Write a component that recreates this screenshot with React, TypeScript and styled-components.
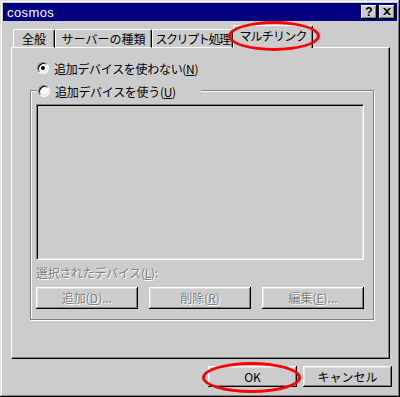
import styled, { createGlobalStyle } from "styled-components";

const FACE = "#cccccc";

const GlobalStyle = createGlobalStyle`
    html, body {
        margin: 0;
        padding: 0;
        background: ${FACE};
    }
    * {
        box-sizing: border-box;
    }
`;

interface TabProps {
    w: number;
    active?: boolean;
    squeeze?: number;
}

interface DisabledProps {
    disabled?: boolean;
}

interface BtnProps {
    w: number;
    h: number;
}

interface RingProps {
    x: number;
    y: number;
    w: number;
    h: number;
}

const Window = styled.div`
    position: relative;
    width: 400px;
    height: 397px;
    padding: 3px;
    background: ${FACE};
    box-shadow: inset -1px -1px #000, inset 1px 1px #e0e0e0, inset -2px -2px #808080, inset 2px 2px #fff;
    font-family: "Noto Sans CJK JP", "Liberation Sans", sans-serif;
    font-size: 12px;
    color: #000;
`;

const TitleBar = styled.div`
    height: 18px;
    background: #000080;
    color: #fff;
    display: flex;
    align-items: center;
    justify-content: space-between;
    padding: 0 2px 0 4px;
`;

const Title = styled.span`
    font-family: "Liberation Sans", sans-serif;
    font-size: 13px;
    letter-spacing: 0.4px;
`;

const CaptionButtons = styled.div`
    display: flex;
    gap: 2px;
`;

const CaptionButton = styled.div`
    width: 16px;
    height: 14px;
    background: ${FACE};
    box-shadow: inset -1px -1px #000, inset 1px 1px #fff, inset -2px -2px #808080;
    display: flex;
    align-items: center;
    justify-content: center;
    color: #000;
    font-family: "Liberation Sans", sans-serif;
    font-weight: 700;
    font-size: 12px;
    line-height: 1;
    padding-bottom: 1px;
`;

const Body = styled.div`
    padding: 0 7px 0 8px;
`;

const TabRow = styled.div`
    display: flex;
    align-items: flex-end;
    height: 22px;
    margin-top: 5px;
    padding-left: 2px;
    position: relative;
    z-index: 1;
    margin-bottom: -1px;
`;

const Tab = styled.div<TabProps>`
    width: ${p => p.w}px;
    height: ${p => (p.active ? 23 : 19)}px;
    background: ${FACE};
    border-top: 1px solid #fff;
    border-left: 1px solid #fff;
    border-right: 1px solid #000;
    border-bottom: ${p => (p.active ? "none" : "1px solid #fff")};
    border-radius: 2px 2px 0 0;
    box-shadow: inset -1px 0 #808080;
    display: flex;
    align-items: center;
    justify-content: center;
    padding-bottom: ${p => (p.active ? 3 : 1)}px;
    letter-spacing: ${p => p.squeeze ?? 0}px;
    white-space: nowrap;
    overflow: hidden;
`;

const Panel = styled.div`
    width: 379px;
    height: 312px;
    border-top: 1px solid #fff;
    border-left: 1px solid #fff;
    border-right: 1px solid #000;
    border-bottom: 1px solid #000;
    box-shadow: inset -1px -1px #808080;
    padding: 13px 0 0 18px;
`;

const RadioRow = styled.label`
    display: flex;
    align-items: center;
    gap: 5px;
    height: 14px;
    margin-left: 7px;
    white-space: nowrap;
    letter-spacing: -0.3px;
`;

const Radio = styled.span<{ checked?: boolean }>`
    position: relative;
    width: 12px;
    height: 12px;
    border-radius: 50%;
    background: #fff;
    border: 1px solid;
    border-color: #808080 #fff #fff #808080;
    box-shadow: inset 1px 1px #000, inset -1px -1px #e0e0e0;
    flex: none;
    &::after {
        content: "";
        display: ${p => (p.checked ? "block" : "none")};
        position: absolute;
        left: 3px;
        top: 3px;
        width: 4px;
        height: 4px;
        border-radius: 50%;
        background: #000;
    }
`;

const GroupBox = styled.div`
    width: 344px;
    margin-top: 15px;
    border: 1px solid #808080;
    box-shadow: inset 1px 1px #fff, 1px 1px 0 #fff;
    padding: 0 9px 10px 5px;
`;

const Legend = styled.div`
    width: 164px;
    height: 14px;
    margin-top: -7px;
    margin-left: 1px;
    background: ${FACE};
    display: flex;
    align-items: center;
    gap: 5px;
    padding-left: 1px;
    white-space: nowrap;
    letter-spacing: -0.3px;
`;

const ListBox = styled.div`
    height: 156px;
    margin-top: 6px;
    background: ${FACE};
    border: 1px solid;
    border-color: #808080 #fff #fff #808080;
    box-shadow: inset 1px 1px #000, inset -1px -1px #e0e0e0;
`;

const Label = styled.div<DisabledProps>`
    height: 14px;
    margin-top: 5px;
    display: flex;
    align-items: center;
    color: ${p => (p.disabled ? "#808080" : "#000")};
    text-shadow: ${p => (p.disabled ? "1px 1px 0 #fff" : "none")};
    white-space: nowrap;
    letter-spacing: -0.3px;
`;

const ButtonRow = styled.div`
    display: flex;
    justify-content: space-between;
    margin-top: 8px;
`;

const Button = styled.div<BtnProps & DisabledProps>`
    width: ${p => p.w}px;
    height: ${p => p.h}px;
    background: ${FACE};
    box-shadow: inset -1px -1px #000, inset 1px 1px #fff, inset -2px -2px #808080, inset 2px 2px #e0e0e0;
    display: flex;
    align-items: center;
    justify-content: center;
    color: ${p => (p.disabled ? "#808080" : "#000")};
    text-shadow: ${p => (p.disabled ? "1px 1px 0 #fff" : "none")};
    white-space: nowrap;
    padding-bottom: 1px;
`;

const DialogButtons = styled.div`
    display: flex;
    justify-content: flex-end;
    gap: 6px;
    margin-top: 7px;
    margin-right: -2px;
`;

const Ring = styled.div<RingProps>`
    position: absolute;
    left: ${p => p.x}px;
    top: ${p => p.y}px;
    width: ${p => p.w}px;
    height: ${p => p.h}px;
    border: 3px solid #ff0000;
    border-radius: 50%;
    pointer-events: none;
    z-index: 5;
`;

const CloseIcon = () => (
    <svg width="8" height="7" viewBox="0 0 8 7">
        <path d="M0 0 L2 0 L4 2 L6 0 L8 0 L5 3.5 L8 7 L6 7 L4 5 L2 7 L0 7 L3 3.5 Z" fill="#000" />
    </svg>
);

export default function App() {
    const tabs = [
        { label: "全般", w: 42 },
        { label: "サーバーの種類", w: 97 },
        { label: "スクリプト処理", w: 81, squeeze: -1.4 },
        { label: "マルチリンク", w: 80, active: true, squeeze: -0.8 },
    ];

    return (
        <>
            <GlobalStyle />
            <Window>
                <TitleBar>
                    <Title>cosmos</Title>
                    <CaptionButtons>
                        <CaptionButton>?</CaptionButton>
                        <CaptionButton>
                            <CloseIcon />
                        </CaptionButton>
                    </CaptionButtons>
                </TitleBar>

                <Body>
                    <TabRow>
                        {tabs.map(t => (
                            <Tab key={t.label} w={t.w} active={t.active} squeeze={t.squeeze}>
                                {t.label}
                            </Tab>
                        ))}
                    </TabRow>

                    <Panel>
                        <RadioRow>
                            <Radio checked />
                            <span>
                                追加デバイスを使わない(<u>N</u>)
                            </span>
                        </RadioRow>

                        <GroupBox>
                            <Legend>
                                <Radio />
                                <span>
                                    追加デバイスを使う(<u>U</u>)
                                </span>
                            </Legend>
                            <ListBox />
                            <Label disabled>
                                選択されたデバイス(<u>L</u>):
                            </Label>
                            <ButtonRow>
                                <Button w={102} h={22} disabled>
                                    追加(<u>D</u>)...
                                </Button>
                                <Button w={102} h={22} disabled>
                                    削除(<u>R</u>)
                                </Button>
                                <Button w={102} h={22} disabled>
                                    編集(<u>E</u>)...
                                </Button>
                            </ButtonRow>
                        </GroupBox>
                    </Panel>

                    <DialogButtons>
                        <Button w={89} h={21}>OK</Button>
                        <Button w={89} h={21}>キャンセル</Button>
                    </DialogButtons>
                </Body>

                <Ring x={228} y={21} w={92} h={30} />
                <Ring x={202} y={362} w={99} h={31} />
            </Window>
        </>
    );
}
